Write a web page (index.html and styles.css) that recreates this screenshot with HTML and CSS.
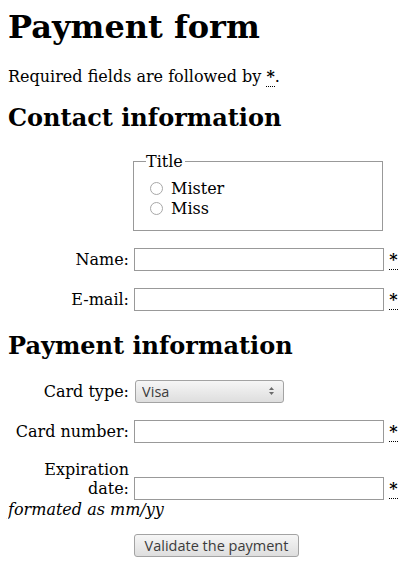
FILE: index.html
```html
<!DOCTYPE html>
<html lang="en">
<head>
<meta charset="utf-8">
<title>Payment form</title>
<link rel="stylesheet" href="styles.css">
</head>
<body>
<form class="form">
  <h1 class="title">Payment form</h1>
  <p class="intro">Required fields are followed by <strong><abbr class="req" title="required">*</abbr></strong>.</p>
  <section>
    <h2 class="section-title">Contact information</h2>
    <fieldset class="choice">
      <legend class="choice-legend">Title</legend>
      <ul class="choice-list">
        <li><label class="choice-item"><input class="radio" type="radio" name="title" value="M.">Mister</label></li>
        <li><label class="choice-item"><input class="radio" type="radio" name="title" value="Ms.">Miss</label></li>
      </ul>
    </fieldset>
    <p class="row">
      <label for="name"><span class="label">Name:</span></label>
      <input class="field" type="text" id="name" name="username">
      <strong><abbr class="req" title="required">*</abbr></strong>
    </p>
    <p class="row">
      <label for="mail"><span class="label">E-mail:</span></label>
      <input class="field" type="email" id="mail" name="usermail">
      <strong><abbr class="req" title="required">*</abbr></strong>
    </p>
  </section>
  <section class="payment">
    <h2 class="section-title">Payment information</h2>
    <p class="row">
      <label for="card"><span class="label">Card type:</span></label>
      <span class="select-wrap">
        <select class="select" id="card" name="usercard">
          <option value="visa">Visa</option>
          <option value="mc">Mastercard</option>
          <option value="amex">American Express</option>
        </select>
        <svg class="select-arrows" width="7" height="12" viewBox="0 0 7 12" aria-hidden="true">
          <path d="M3.5 2 L6 5 L1 5 Z" fill="#6a6a6a"/>
          <path d="M3.5 10 L6 7 L1 7 Z" fill="#6a6a6a"/>
        </svg>
      </span>
    </p>
    <p class="row">
      <label for="number"><span class="label">Card number:</span></label>
      <input class="field" type="tel" id="number" name="cardnumber">
      <strong><abbr class="req" title="required">*</abbr></strong>
    </p>
    <p class="row">
      <label for="date"><span class="label">Expiration date:</span></label>
      <input class="field" type="tel" id="date" name="expiration">
      <strong><abbr class="req" title="required">*</abbr></strong>
      <br><em class="hint">formated as mm/yy</em>
    </p>
  </section>
  <section class="actions">
    <button class="submit" type="submit">Validate the payment</button>
  </section>
</form>
</body>
</html>
```
FILE: styles.css
```css
html, body {
  background: #fff;
}
body {
  margin: 8px;
  font-family: "DejaVu Serif", serif;
  font-size: 16px;
  color: #000;
}
.form {
  margin: 0;
  padding: 0;
}
.title {
  margin: 0 0 21px;
  font-size: 32px;
  font-weight: bold;
}
.intro {
  margin: 0;
}
.section-title {
  font-size: 24px;
  margin: 17px 0 20px;
}
.payment .section-title {
  margin-top: 20px;
}
.req {
  text-decoration: none;
  border-bottom: 1px dotted #000;
}
.choice {
  margin: 0 0 0 125px;
  width: 250px;
  box-sizing: border-box;
  border: 1px solid #999;
  padding: 8px 12px 11px;
}
.choice-legend {
  padding: 0 2px 0 0;
}
.choice-list {
  margin: 0;
  padding: 0;
  list-style: none;
}
.choice-item {
  display: inline-flex;
  align-items: center;
}
.radio {
  appearance: none;
  -webkit-appearance: none;
  width: 13px;
  height: 13px;
  border: 1px solid #a8a8a8;
  border-radius: 50%;
  margin: 0 8px 0 4px;
  box-sizing: border-box;
  background: #fff;
}
.row {
  margin: 17px 0 0;
}
.label {
  display: inline-block;
  width: 121px;
  text-align: right;
}
.field {
  font: 16px "DejaVu Sans", sans-serif;
  width: 250px;
  height: 23px;
  box-sizing: border-box;
  border: 1px solid #999;
  margin: 0;
  padding: 1px 2px;
  vertical-align: baseline;
}
.hint {
  font-style: italic;
}
.select-wrap {
  position: relative;
  display: inline-block;
  margin-left: 1px;
}
.select {
  appearance: none;
  -webkit-appearance: none;
  width: 149px;
  height: 23px;
  box-sizing: border-box;
  border: 1px solid #a3a3a3;
  border-radius: 3px;
  background: linear-gradient(#f6f6f6, #dedede);
  color: #3c3c3c;
  font: 14.5px "Open Sans", sans-serif;
  padding: 0 6px;
  margin: 0;
}
.select-arrows {
  position: absolute;
  right: 9px;
  top: 5px;
  pointer-events: none;
}
.actions {
  margin-top: 15px;
}
.submit {
  margin-left: 126px;
  width: 165px;
  height: 23px;
  box-sizing: border-box;
  border: 1px solid #a3a3a3;
  border-radius: 3px;
  background: linear-gradient(#f6f6f6, #dedede);
  color: #3c3c3c;
  font: 14.5px "Open Sans", sans-serif;
  padding: 0;
}
```
